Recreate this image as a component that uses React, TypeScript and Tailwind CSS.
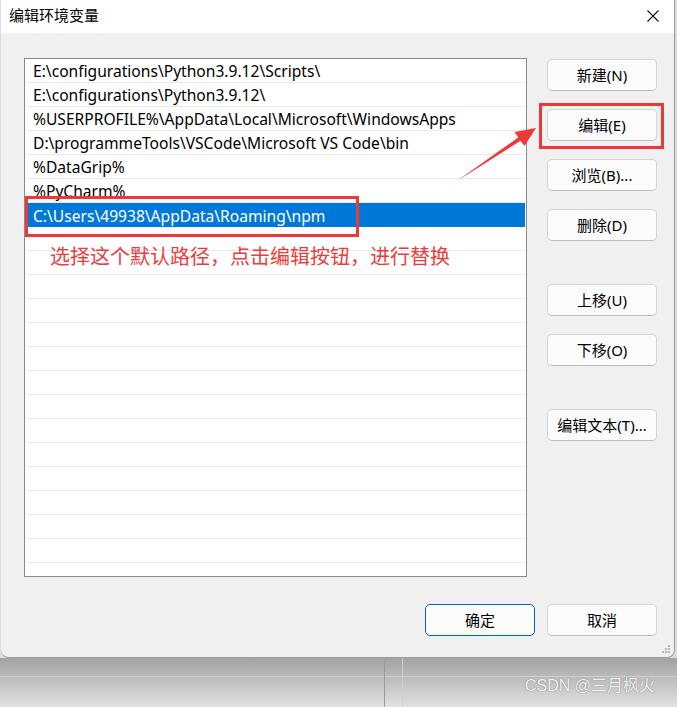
const rows = [
  "E:\\configurations\\Python3.9.12\\Scripts\\",
  "E:\\configurations\\Python3.9.12\\",
  "%USERPROFILE%\\AppData\\Local\\Microsoft\\WindowsApps",
  "D:\\programmeTools\\VSCode\\Microsoft VS Code\\bin",
  "%DataGrip%",
  "%PyCharm%",
  "C:\\Users\\49938\\AppData\\Roaming\\npm",
];

const font = "font-['Noto_Sans','Noto_Sans_CJK_SC',sans-serif]";

function Btn({ label, primary, className = "" }: { label: string; primary?: boolean; className?: string }) {
  return (
    <button
      type="button"
      className={
        "w-[110px] h-[32px] rounded-[5px] bg-[#fbfbfb] text-[15px] text-black flex items-center justify-center " +
        (primary ? "border border-[#0067c0] " : "border border-[#d4d4d4] border-b-[#bcbcbc] ") +
        className
      }
    >
      {label}
    </button>
  );
}

export default function App() {
  const all = [...rows, ...Array(16).fill("")];
  return (
    <div className={`relative w-[677px] h-[707px] overflow-hidden bg-[#dcdcdc] ${font}`}>
      <div className="relative ml-[1px] w-[674px] h-[658px] bg-[#f0f0f0] rounded-b-[8px] border-b border-r border-[#9c9c9c]">
        {/* title bar */}
        <div className="h-[33px] bg-white flex items-center justify-between pl-[8px] pr-[14px] pb-[3px]">
          <span className="text-[15px] text-black">编辑环境变量</span>
          <svg width="12" height="12" viewBox="0 0 12 12" className="mr-[1px] mt-[1px]">
            <path d="M0.5 0.5 L11.5 11.5 M11.5 0.5 L0.5 11.5" stroke="#111" strokeWidth="1.1" />
          </svg>
        </div>

        <div className="flex pl-[23px] pt-[25px] gap-[20px]">
          <div className="w-[503px] h-[519px] bg-white border border-[#868a91] px-[1px] overflow-hidden">
            {all.map((r, i) => (
              <div
                key={i}
                className={
                  "h-[24px] flex items-center pl-[7px] pt-[3px] text-[15.6px] whitespace-nowrap " +
                  (i === 6 ? "bg-[#0078d7] text-white" : "border-b border-[#e9e9e9] text-black")
                }
              >
                {r}
              </div>
            ))}
          </div>

          <div className="flex flex-col pt-[1px] gap-[18px]">
            <Btn label="新建(N)" />
            <Btn label="编辑(E)" />
            <Btn label="浏览(B)..." />
            <Btn label="删除(D)" />
            <Btn label="上移(U)" className="mt-[25px]" />
            <Btn label="下移(O)" />
            <Btn label="编辑文本(T)..." className="mt-[25px]" />
          </div>
        </div>

        <div className="flex justify-end gap-[12px] pr-[17px] mt-[27px]">
          <Btn label="确定" primary />
          <Btn label="取消" />
        </div>

        {/* resize grip */}
        <svg width="10" height="10" viewBox="0 0 10 10" className="absolute right-[3px] bottom-[3px]">
          <g fill="#b4b4b4">
            <rect x="7" y="1" width="2" height="2" />
            <rect x="4" y="4" width="2" height="2" />
            <rect x="7" y="4" width="2" height="2" />
            <rect x="1" y="7" width="2" height="2" />
            <rect x="4" y="7" width="2" height="2" />
            <rect x="7" y="7" width="2" height="2" />
          </g>
        </svg>
      </div>

      {/* desktop behind dialog */}
      <div className="relative h-[49px] bg-linear-to-b from-[#a2a2a2] to-[#e2e2e2]">
        <div className="absolute left-0 right-0 top-[18px] h-px bg-[#cfcfcf]" />
        <div className="absolute left-0 right-0 top-[42px] h-px bg-[#d8d8d8]" />
        <div className="absolute left-[384px] top-0 bottom-0 w-px bg-[#9a9a9a]" />
        <div className="absolute left-[402px] top-0 bottom-0 w-px bg-[#d0d0d0]" />
        <span className="absolute left-[525px] top-[20px] text-[16px] leading-none text-[#f2f2f2] [text-shadow:0_0_1px_#8a8a8a,0_0_1px_#8a8a8a] font-['Liberation_Sans','Noto_Sans_CJK_SC',sans-serif]">
          CSDN @三月枫火
        </span>
      </div>

      {/* annotations */}
      <div className="absolute left-[25px] top-[196px] w-[334px] h-[41px] border-[3px] border-[#ee3838]" />
      <div className="absolute left-[539px] top-[103px] w-[125px] h-[46px] border-[3px] border-[#ee3838]" />
      <span className="absolute left-[50px] top-[245px] text-[20px] leading-[22px] text-[#ec3c3c] font-['Noto_Sans_CJK_SC',sans-serif]">
        选择这个默认路径，点击编辑按钮，进行替换
      </span>
      <svg width="677" height="707" className="absolute left-0 top-0 pointer-events-none">
        <polygon
          points="536,128 514.5,132 518.3,137.4 457,181 520.5,140.8 524.5,146"
          fill="#ee3838"
        />
      </svg>
    </div>
  );
}
